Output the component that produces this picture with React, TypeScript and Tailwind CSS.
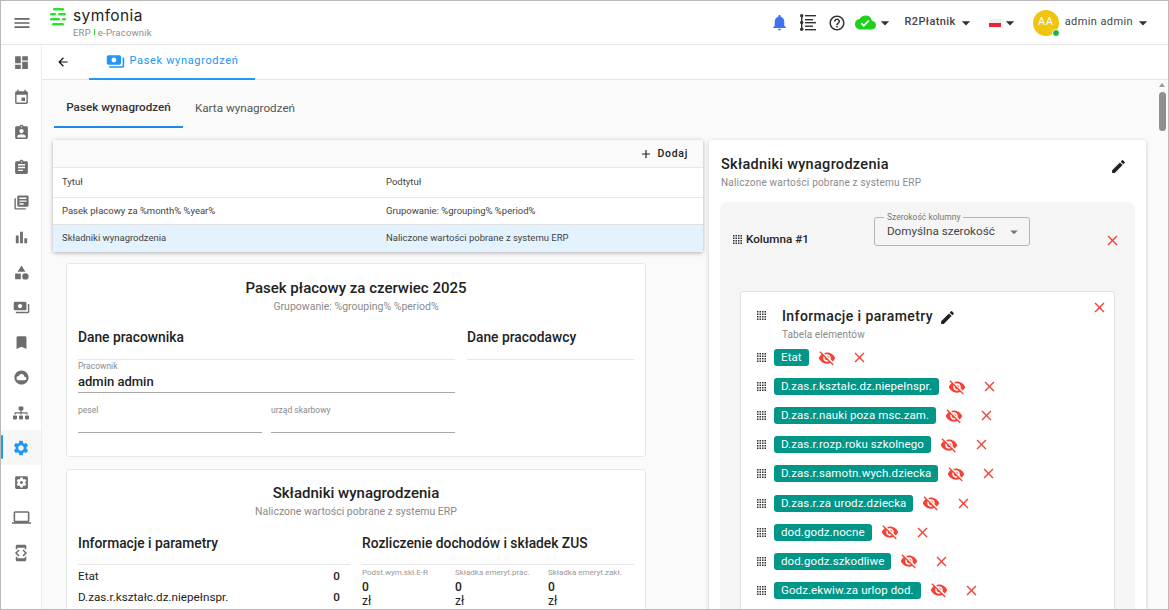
import {
  MdAdd,
  MdArrowBack,
  MdArrowDropDown,
  MdAssignment,
  MdAssignmentInd,
  MdBarChart,
  MdBookmark,
  MdCategory,
  MdClose,
  MdCloudCircle,
  MdCloudDone,
  MdDashboard,
  MdDeveloperMode,
  MdEdit,
  MdEvent,
  MdHelpOutline,
  MdLaptop,
  MdLibraryBooks,
  MdMenu,
  MdNotifications,
  MdPayments,
  MdSettings,
  MdSettingsApplications,
  MdVisibilityOff,
} from "react-icons/md";
import { FaSitemap } from "react-icons/fa";

const sideIcons = [
  MdDashboard,
  MdEvent,
  MdAssignmentInd,
  MdAssignment,
  MdLibraryBooks,
  MdBarChart,
  MdCategory,
  MdPayments,
  MdBookmark,
  MdCloudCircle,
];

const chips = [
  "D.zas.r.kształc.dz.niepełnspr.",
  "D.zas.r.nauki poza msc.zam.",
  "D.zas.r.rozp.roku szkolnego",
  "D.zas.r.samotn.wych.dziecka",
  "D.zas.r.za urodz.dziecka",
  "dod.godz.nocne",
  "dod.godz.szkodliwe",
  "Godz.ekwiw.za urlop dod.",
];

function Logo() {
  return (
    <svg width="17" height="18" viewBox="0 0 17 18" className="shrink-0">
      <rect x="3" y="0" width="11" height="2.6" rx="1.3" fill="#2fe02f" />
      <rect x="0" y="5" width="6" height="2.4" rx="1.2" fill="#2fe02f" />
      <rect x="8" y="5" width="8" height="2.4" rx="1.2" fill="#2fe02f" />
      <rect x="0" y="10" width="10" height="2.4" rx="1.2" fill="#2fe02f" />
      <rect x="12" y="10" width="4" height="2.4" rx="1.2" fill="#2fe02f" />
      <rect x="2" y="15" width="12" height="2.6" rx="1.3" fill="#2fe02f" />
    </svg>
  );
}

function ListIcon() {
  return (
    <svg width="16" height="17" viewBox="0 0 16 17" fill="#333">
      <rect x="1" y="1" width="1.4" height="15" />
      <circle cx="1.7" cy="1.7" r="1.7" />
      <circle cx="1.7" cy="8.5" r="1.7" />
      <circle cx="1.7" cy="15.3" r="1.7" />
      <rect x="5" y="1" width="11" height="1.4" />
      <rect x="5" y="5" width="8" height="1.4" />
      <rect x="5" y="8" width="11" height="1.4" />
      <rect x="5" y="11.5" width="8" height="1.4" />
      <rect x="5" y="15" width="11" height="1.4" />
    </svg>
  );
}

function Grip() {
  const dots = [];
  for (let y = 0; y < 4; y++) {
    for (let x = 0; x < 4; x++) {
      dots.push(<rect key={`${x}-${y}`} x={x * 2.5} y={y * 2.5} width="1.5" height="1.5" />);
    }
  }
  return (
    <svg width="9" height="9" viewBox="0 0 9 9" fill="#333" className="shrink-0">
      {dots}
    </svg>
  );
}

function ChipRow({ label }: { label: string }) {
  return (
    <div className="flex h-[29.1px] items-center pl-[16px]">
      <Grip />
      <span className="ml-[8px] rounded-[3px] bg-[#009688] px-[7px] text-[11.5px] leading-[17px] tracking-[0.1px] text-white">
        {label}
      </span>
      <MdVisibilityOff className="ml-[9px] shrink-0 text-[#f44336]" size={18} />
      <MdClose className="ml-[15px] shrink-0 text-[#f44336]" size={17} />
    </div>
  );
}

function SmallField({ label, value }: { label: string; value?: string }) {
  return (
    <div className="min-w-0 flex-1">
      <div className="text-[8.5px] leading-[11px] text-[#8a8a8a]">{label}</div>
      {value ? (
        <div className="h-[21px] border-b border-[#a8a8a8] text-[13px] font-medium leading-[20px] text-[#222]">{value}</div>
      ) : (
        <div className="h-[17px] border-b border-[#a8a8a8]" />
      )}
    </div>
  );
}

function Amount({ label }: { label: string }) {
  return (
    <div className="w-[93px] shrink-0">
      <div className="text-[8px] leading-[12px] text-[#999]">{label}</div>
      <div className="mt-[1px] text-[12px] font-medium leading-[14px] text-[#222]">0</div>
      <div className="text-[12px] leading-[15px] text-[#222]">zł</div>
    </div>
  );
}

export default function App() {
  return (
    <div className="flex h-[610px] w-[1169px] flex-col overflow-hidden border border-[#b8b8b8] bg-white font-['Roboto',sans-serif] text-[#222]">
      {/* top bar */}
      <header className="flex h-[44px] shrink-0 items-center border-b border-[#e5e5e5] bg-white">
        <div className="flex w-[41px] justify-center">
          <MdMenu size={20} className="text-[#666]" />
        </div>
        <div className="ml-[8px] flex flex-col">
          <div className="flex items-center gap-[6px]">
            <Logo />
            <span className="-mt-[2px] font-['Inter',sans-serif] text-[15.5px] leading-[18px] tracking-[0.4px] text-[#222]">symfonia</span>
          </div>
          <div className="mt-[1px] flex items-center gap-[3px] pl-[23px] text-[9.5px] leading-[11px] tracking-[0.2px] text-[#8d8d8d]">
            ERP <span className="h-[6px] w-[1px] bg-[#2fe02f]" /> e-Pracownik
          </div>
        </div>
        <div className="ml-auto flex items-center">
          <MdNotifications size={19} className="text-[#3f73ee]" />
          <div className="ml-[11px]">
            <ListIcon />
          </div>
          <MdHelpOutline size={18} className="ml-[12px] text-[#333]" />
          <MdCloudDone size={21} className="ml-[9px] text-[#1fd01f]" />
          <MdArrowDropDown size={20} className="-ml-[1px] text-[#333]" />
          <span className="ml-[9px] text-[11px] font-medium tracking-[0.4px] text-[#444]">R2Płatnik</span>
          <MdArrowDropDown size={20} className="text-[#333]" />
          <div className="ml-[13px] flex h-[8px] w-[12px] flex-col overflow-hidden">
            <div className="h-1/2 bg-[#eeeeee]" />
            <div className="h-1/2 bg-[#ee2233]" />
          </div>
          <MdArrowDropDown size={20} className="-ml-[1px] text-[#333]" />
          <div className="relative ml-[13px] flex h-[26px] w-[26px] items-center justify-center rounded-full bg-[#f1c40f] text-[11px] tracking-[0.5px] text-white">
            AA
            <span className="absolute -bottom-[1px] -right-[1px] h-[8px] w-[8px] rounded-full border border-white bg-[#22b14c]" />
          </div>
          <span className="ml-[6px] text-[11px] tracking-[0.4px] text-[#444]">admin admin</span>
          <MdArrowDropDown size={20} className="mr-[15px] text-[#333]" />
        </div>
      </header>

      <div className="flex min-h-0 flex-1">
        {/* side menu */}
        <aside className="flex w-[41px] shrink-0 flex-col items-center border-r border-[#eeeeee] bg-white">
          {sideIcons.map((Icon, i) => (
            <div key={i} className="flex h-[35px] w-full items-center justify-center text-[#6e6e6e]">
              <Icon size={17} />
            </div>
          ))}
          <div className="flex h-[35px] w-full items-center justify-center text-[#6e6e6e]">
            <FaSitemap size={16} />
          </div>
          <div className="relative flex h-[35px] w-full items-center justify-center bg-[#f7f7f7] text-[#2196f3]">
            <span className="absolute left-0 top-[5px] h-[24px] w-[2px] rounded-[1px] bg-[#2196f3]" />
            <MdSettings size={18} />
          </div>
          <div className="flex h-[35px] w-full items-center justify-center text-[#6e6e6e]">
            <MdSettingsApplications size={17} />
          </div>
          <div className="flex h-[35px] w-full items-center justify-center text-[#6e6e6e]">
            <MdLaptop size={19} />
          </div>
          <div className="flex h-[35px] w-full items-center justify-center text-[#6e6e6e]">
            <MdDeveloperMode size={18} />
          </div>
        </aside>

        <div className="flex min-w-0 flex-1 flex-col">
          {/* page tab */}
          <div className="flex h-[35px] shrink-0 items-center border-b border-[#e5e5e5] bg-white">
            <MdArrowBack size={14} className="ml-[14px] text-[#111]" />
            <div className="ml-[19px] flex h-[35px] w-[166px] items-center justify-center gap-[5px] border-b-2 border-[#2196f3] text-[#2196f3]">
              <MdPayments size={19} />
              <span className="text-[11px] tracking-[0.65px]">Pasek wynagrodzeń</span>
            </div>
          </div>

          <div className="flex min-h-0 flex-1 bg-[#fafafa]">
            <main className="min-w-0 flex-1 overflow-hidden pl-[11px]">
              {/* inner tabs */}
              <div className="ml-[1px] flex h-[48px] items-end text-[11.7px]">
                <div className="flex h-[48px] w-[129px] items-center justify-center border-b-2 border-[#1e88e5] pt-[10px] font-medium text-[#333]">
                  Pasek wynagrodzeń
                </div>
                <div className="flex h-[48px] w-[124px] items-center justify-center pt-[10px] text-[#555]">Karta wynagrodzeń</div>
              </div>

              <div className="mt-[12px] flex items-start gap-[6px]">
                <div className="w-[650px] shrink-0">
                  {/* table */}
                  <div className="rounded-[2px] bg-white text-[9.5px] text-[#444] shadow-[0_1px_4px_rgba(0,0,0,0.3)]">
                    <div className="flex h-[28px] items-center justify-end border-b border-[#e8e8e8] bg-[#fafafa] pr-[15px] text-[10.5px] font-medium tracking-[0.7px] text-[#222]">
                      <MdAdd size={14} className="mr-[4px]" />
                      Dodaj
                    </div>
                    <div className="flex h-[30px] items-center border-b border-[#e8e8e8] pl-[9px]">
                      <div className="w-[324px]">Tytuł</div>
                      <div>Podtytuł</div>
                    </div>
                    <div className="flex h-[27px] items-center border-b border-[#e0e0e0] pl-[9px]">
                      <div className="w-[324px]">Pasek płacowy za %month% %year%</div>
                      <div>Grupowanie: %grouping% %period%</div>
                    </div>
                    <div className="flex h-[27px] items-center bg-[#e3f2fd] pl-[9px]">
                      <div className="w-[324px]">Składniki wynagrodzenia</div>
                      <div>Naliczone wartości pobrane z systemu ERP</div>
                    </div>
                  </div>

                  {/* preview 1 */}
                  <div className="ml-[13px] mt-[11px] h-[194px] w-[580px] rounded-[3px] border border-[#e8e8e8] bg-white px-[11px] pt-[14px]">
                    <div className="text-center text-[15px] font-medium leading-[20px] text-[#222]">Pasek płacowy za czerwiec 2025</div>
                    <div className="mt-[2px] text-center text-[10.5px] leading-[14px] text-[#8a8a8a]">Grupowanie: %grouping% %period%</div>
                    <div className="mt-[13px] flex gap-[12px]">
                      <div className="w-[377px]">
                        <div className="h-[33px] border-b border-[#e8e8e8] text-[13.8px] font-medium leading-[20px] text-[#222]">Dane pracownika</div>
                        <div className="pt-[1px]">
                          <SmallField label="Pracownik" value="admin admin" />
                        </div>
                        <div className="mt-[12px] flex gap-[9px]">
                          <SmallField label="pesel" />
                          <SmallField label="urząd skarbowy" />
                        </div>
                      </div>
                      <div className="h-[33px] flex-1 border-b border-[#e8e8e8] text-[13.8px] font-medium leading-[20px] text-[#222]">Dane pracodawcy</div>
                    </div>
                  </div>

                  {/* preview 2 */}
                  <div className="ml-[13px] mt-[12px] h-[200px] w-[580px] rounded-[3px] border border-[#e8e8e8] bg-white px-[11px] pt-[13px]">
                    <div className="text-center text-[15px] font-medium leading-[20px] text-[#222]">Składniki wynagrodzenia</div>
                    <div className="mt-[2px] text-center text-[10.5px] leading-[14px] text-[#8a8a8a]">Naliczone wartości pobrane z systemu ERP</div>
                    <div className="mt-[14px] flex gap-[12px]">
                      <div className="w-[272px] shrink-0">
                        <div className="h-[32px] border-b border-[#e8e8e8] text-[13.8px] font-medium leading-[20px] text-[#222]">Informacje i parametry</div>
                        <div className="flex h-[21px] items-center justify-between pr-[10px] pt-[2px] text-[11.7px]">
                          <span>Etat</span>
                          <span className="font-medium">0</span>
                        </div>
                        <div className="flex h-[21px] items-center justify-between pr-[10px] pt-[2px] text-[11.7px]">
                          <span>D.zas.r.kształc.dz.niepełnspr.</span>
                          <span className="font-medium">0</span>
                        </div>
                      </div>
                      <div className="min-w-0 flex-1">
                        <div className="h-[32px] whitespace-nowrap border-b border-[#e8e8e8] text-[13.8px] font-medium leading-[20px] text-[#222]">Rozliczenie dochodów i składek ZUS</div>
                        <div className="flex pt-[2px]">
                          <Amount label="Podst.wym.skł.E-R" />
                          <Amount label="Składka emeryt.prac." />
                          <Amount label="Składka emeryt.zakł." />
                        </div>
                      </div>
                    </div>
                  </div>
                </div>

                {/* editor panel */}
                <div className="h-[500px] w-[437px] shrink-0 rounded-[3px] bg-white px-[11px] pt-[15px] shadow-[0_1px_4px_rgba(0,0,0,0.2)]">
                  <div className="flex items-start justify-between pl-[1px] pr-[8px]">
                    <div>
                      <div className="text-[14.5px] font-medium leading-[20px] tracking-[0.3px] text-[#222]">Składniki wynagrodzenia</div>
                      <div className="mt-[1px] text-[10px] leading-[14px] tracking-[0.2px] text-[#8a8a8a]">Naliczone wartości pobrane z systemu ERP</div>
                    </div>
                    <MdEdit size={17} className="mt-[3px] text-[#222]" />
                  </div>
                  <div className="mt-[12px] rounded-[8px] bg-[#f5f5f5] px-[20px] pt-[15px]">
                    <div className="relative flex h-[74px] items-start">
                      <div className="-ml-[7px] mt-[14px] flex items-center gap-[4px]">
                        <Grip />
                        <span className="whitespace-nowrap text-[11.7px] font-medium text-[#222]">Kolumna #1</span>
                      </div>
                      <div className="relative ml-[65px] flex h-[29px] w-[156px] items-center justify-between whitespace-nowrap rounded-[3px] border border-[#b5b5b5] pl-[12px] pr-[6px] text-[11.7px] text-[#444]">
                        <span className="absolute -top-[6px] left-[9px] bg-[#f5f5f5] px-[3px] text-[8.5px] leading-[10px] text-[#777]">Szerokość kolumny</span>
                        Domyślna szerokość
                        <MdArrowDropDown size={18} className="text-[#777]" />
                      </div>
                      <MdClose size={17} className="ml-auto mr-[-6px] mt-[15px] text-[#f44336]" />
                    </div>
                    <div className="rounded-[3px] border border-[#e0e0e0] bg-white pb-[8px] pt-[14px]">
                      <div className="relative flex items-start pl-[16px]">
                        <div className="mt-[5px]">
                          <Grip />
                        </div>
                        <div className="ml-[16px]">
                          <div className="flex items-center gap-[6px]">
                            <span className="text-[14px] font-medium leading-[20px] tracking-[0.4px] text-[#222]">Informacje i parametry</span>
                            <MdEdit size={17} className="mt-[2px] text-[#222]" />
                          </div>
                          <div className="mb-[1px] pt-[1px] text-[10px] leading-[15px] tracking-[0.1px] text-[#8a8a8a]">Tabela elementów</div>
                        </div>
                        <MdClose size={17} className="absolute -top-[7px] right-[6px] text-[#f44336]" />
                      </div>
                      <ChipRow label="Etat" />
                      {chips.map((c) => (
                        <ChipRow key={c} label={c} />
                      ))}
                    </div>
                  </div>
                </div>
              </div>
            </main>

            {/* scrollbar */}
            <div className="flex w-[12px] shrink-0 flex-col items-center pt-[3px]">
              <div className="h-0 w-0 border-x-[3px] border-b-[4px] border-x-transparent border-b-[#999]" />
              <div className="mt-[5px] h-[39px] w-[7px] rounded-[4px] bg-[#8f8f8f]" />
            </div>
          </div>
        </div>
      </div>
    </div>
  );
}
